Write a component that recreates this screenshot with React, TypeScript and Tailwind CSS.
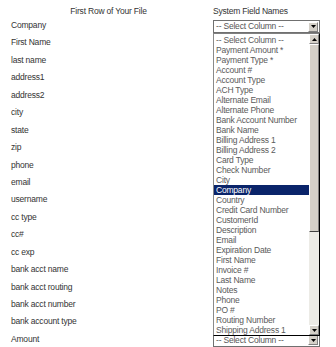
import type React from "react";

const fileColumns = [
  "Company",
  "First Name",
  "last name",
  "address1",
  "address2",
  "city",
  "state",
  "zip",
  "phone",
  "email",
  "username",
  "cc type",
  "cc#",
  "cc exp",
  "bank acct name",
  "bank acct routing",
  "bank acct number",
  "bank account type",
  "Amount",
];

const systemFields = [
  "-- Select Column --",
  "Payment Amount *",
  "Payment Type *",
  "Account #",
  "Account Type",
  "ACH Type",
  "Alternate Email",
  "Alternate Phone",
  "Bank Account Number",
  "Bank Name",
  "Billing Address 1",
  "Billing Address 2",
  "Card Type",
  "Check Number",
  "City",
  "Company",
  "Country",
  "Credit Card Number",
  "CustomerId",
  "Description",
  "Email",
  "Expiration Date",
  "First Name",
  "Invoice #",
  "Last Name",
  "Notes",
  "Phone",
  "PO #",
  "Routing Number",
  "Shipping Address 1",
];

const Arrow: React.FC<{ up?: boolean }> = ({ up }) => (
  <svg width="5" height="3" viewBox="0 0 5 3" className="block">
    <path d={up ? "M0 3 L2.5 0 L5 3 Z" : "M0 0 L5 0 L2.5 3 Z"} fill="#000" />
  </svg>
);

const ScrollButton: React.FC<{ up?: boolean }> = ({ up }) => (
  <div className="flex h-[10px] w-[10px] shrink-0 items-center justify-center border-t border-l border-t-white border-l-white border-r border-b border-r-[#808080] border-b-[#808080] bg-[#d4d0c8]">
    <Arrow up={up} />
  </div>
);

const ClosedSelect: React.FC<{ hidden?: boolean }> = ({ hidden }) => (
  <div
    className={
      hidden
        ? "invisible h-[13px] w-[107px]"
        : "flex h-[13px] w-[107px] items-center justify-between border border-[#707070] bg-white pl-[2px] pr-[1px] leading-[11px] text-[#555]"
    }
  >
    {!hidden && (
      <>
        <span>-- Select Column --</span>
        <ScrollButton />
      </>
    )}
  </div>
);

export default function App() {
  const selected = "Company";
  const last = fileColumns.length - 1;

  return (
    <div className="relative h-[347px] w-[336px] overflow-hidden bg-white pl-[11px] font-['Liberation_Sans',Arial,sans-serif] text-[8.5px] tracking-[-0.2px] text-[#333]">
      <div className="flex h-[20px] pt-[6px] leading-[11px]">
        <div className="w-[202px] pr-[7px] text-center">First Row of Your File</div>
        <div>System Field Names</div>
      </div>

      {fileColumns.map((name, i) => (
        <div key={name} className="flex h-[17.44px] items-start">
          <div className="w-[202px] leading-[11px]">{name}</div>
          {/* rows under the open list keep their place but are covered */}
          <ClosedSelect hidden={i > 0 && i < last} />
        </div>
      ))}

      {/* open dropdown for the first row */}
      <div className="absolute top-[33px] left-[213px] flex h-[303px] w-[107px] border border-t-[#808080] border-l-[#8a8a8a] border-r-black border-b-black bg-white">
        <ul className="flex-1 pt-[1px] leading-[10px] text-[#5a5a5a]">
          {systemFields.map((field) => (
            <li
              key={field}
              className={
                field === selected
                  ? "h-[10px] bg-[#0a246a] pl-[2px] whitespace-nowrap text-white"
                  : "h-[10px] pl-[2px] whitespace-nowrap"
              }
            >
              {field}
            </li>
          ))}
        </ul>
        <div className="flex w-[10px] flex-col">
          <ScrollButton up />
          <div className="h-[188px] border-t border-l border-t-white border-l-white border-r border-b border-r-[#808080] border-b-[#404040] bg-[#d4d0c8]" />
          <div className="flex-1 bg-[#ecebe6]" />
          <ScrollButton />
        </div>
      </div>
    </div>
  );
}
